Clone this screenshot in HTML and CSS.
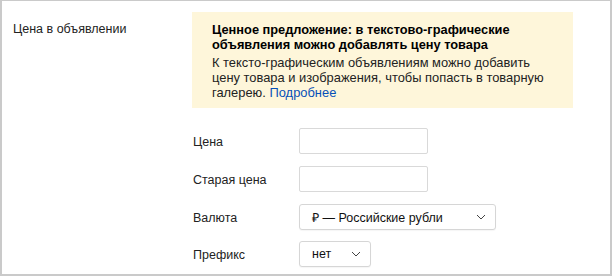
FILE: index.html
```html
<!DOCTYPE html>
<html lang="ru">
<head>
<meta charset="utf-8">
<link rel="stylesheet" href="styles.css">
</head>
<body>
<div class="frame">
  <div class="side">Цена в объявлении</div>
  <div class="main">
    <div class="notice">
      <div class="notice-title">Ценное предложение: в текстово-графические объявления можно добавлять цену товара</div>
      <div class="notice-text">К тексто-графическим объявлениям можно добавить цену товара и изображения, чтобы попасть в товарную галерею. <a class="link" href="#">Подробнее</a></div>
    </div>
    <div class="form">
      <div class="row">
        <div class="label">Цена</div>
        <div class="input input-price"></div>
      </div>
      <div class="row">
        <div class="label">Старая цена</div>
        <div class="input input-price"></div>
      </div>
      <div class="row">
        <div class="label">Валюта</div>
        <div class="select select-currency">
          <span>₽ — Российские рубли</span>
          <svg class="chev" width="10" height="6" viewBox="0 0 10 6"><path d="M1 1 L5 5 L9 1" fill="none" stroke="#444" stroke-width="1"/></svg>
        </div>
      </div>
      <div class="row row-tight">
        <div class="label">Префикс</div>
        <div class="select select-prefix">
          <span>нет</span>
          <svg class="chev" width="10" height="6" viewBox="0 0 10 6"><path d="M1 1 L5 5 L9 1" fill="none" stroke="#444" stroke-width="1"/></svg>
        </div>
      </div>
    </div>
  </div>
</div>
</body>
</html>
```

FILE: styles.css
```css
html, body {
  margin: 0;
  padding: 0;
  background: #fff;
}
body {
  font-family: "Liberation Sans", Arial, sans-serif;
  font-size: 12.5px;
  color: #222;
}
.frame {
  box-sizing: border-box;
  width: 612px;
  height: 276px;
  border: 2px solid #cacaca;
  border-top-width: 1px;
  display: flex;
}
.side {
  width: 179px;
  padding-left: 11px;
  padding-top: 21px;
  line-height: 15px;
  font-size: 12.5px;
  color: #222;
}
.main {
  padding-top: 11px;
  display: flex;
  flex-direction: column;
}
.notice {
  box-sizing: border-box;
  width: 381px;
  height: 96px;
  background: #fef6da;
  padding: 10px 20px 7px 20px;
}
.notice-title {
  font-weight: bold;
  font-size: 12.8px;
  line-height: 15px;
  color: #000;
}
.notice-text {
  margin-top: 3px;
  font-size: 12.9px;
  line-height: 15px;
  color: #222;
}
.link {
  color: #0650b8;
  text-decoration: none;
}
.form {
  padding-top: 20px;
  padding-left: 1px;
  display: flex;
  flex-direction: column;
  gap: 12px;
}
.row {
  display: flex;
  align-items: center;
  height: 26px;
}
.row-tight {
  margin-top: -1px;
}
.label {
  width: 106px;
  font-size: 12.5px;
  color: #222;
  padding-top: 2px;
}
.input {
  box-sizing: border-box;
  height: 26px;
  border: 1px solid #d9d9d9;
  border-radius: 2px;
  background: #fff;
}
.input-price {
  width: 129px;
}
.select {
  box-sizing: border-box;
  height: 26px;
  border: 1px solid #d6d6d6;
  border-radius: 3px;
  background: #fff;
  box-shadow: 0 1px 1px rgba(0, 0, 0, 0.04);
  display: flex;
  align-items: center;
  justify-content: space-between;
  padding: 0 9px 0 12px;
  font-size: 12.5px;
  color: #111;
}
.select-currency {
  width: 197px;
}
.select-prefix {
  width: 72px;
}
.chev {
  display: block;
}
```
